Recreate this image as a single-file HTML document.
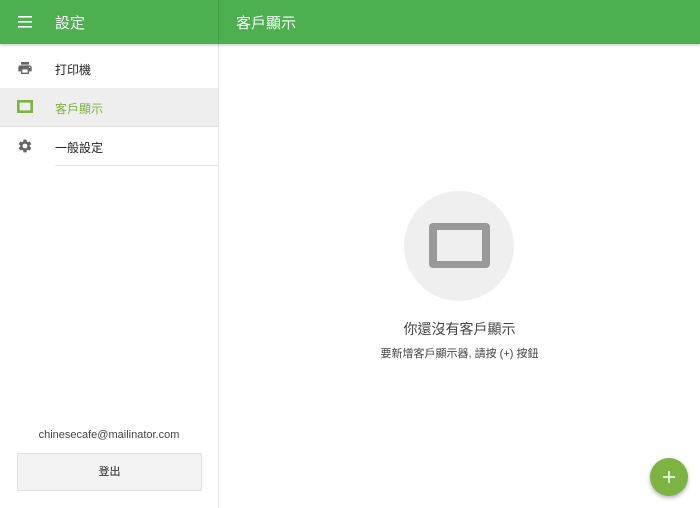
<!DOCTYPE html><html><head><style>
*{margin:0;padding:0;box-sizing:border-box}
body{width:700px;height:508px;overflow:hidden;background:#fff;font-family:"Liberation Sans","Noto Sans CJK TC",sans-serif;position:relative}
.hdr{position:absolute;left:0;top:0;width:700px;height:44px;background:#4caf50;box-shadow:0 1px 3px rgba(0,0,0,.25);z-index:2}
.hdr .sep{position:absolute;left:218px;top:0;width:1px;height:44px;background:#45a049}
.t{position:absolute;color:#fff;font-size:15px;top:12px}
.side{position:absolute;left:218px;top:44px;width:1px;height:464px;background:#e4e4e4}
.row{position:absolute;left:0;width:218px;height:39px;font-size:12px;color:#222}
.row span{position:absolute;left:55px;top:12px}
.row .ln{position:absolute;left:55px;right:0;bottom:0;height:1px;background:#e0e0e0}
.ic{position:absolute;left:17px;top:11px}
</style></head><body>
<div class="hdr"><div class="sep"></div>
<svg style="position:absolute;left:18px;top:16px" width="14" height="12"><rect y="0" width="14" height="1.6" fill="#fff"/><rect y="5" width="14" height="1.6" fill="#fff"/><rect y="10" width="14" height="1.6" fill="#fff"/></svg>
<div class="t" style="left:55px">設定</div><div class="t" style="left:236px">客戶顯示</div></div>
<div class="side"></div>
<div class="row" style="top:49px"><svg class="ic" width="16" height="16" viewBox="0 0 24 24"><path fill="#666" d="M19 8H5c-1.66 0-3 1.34-3 3v6h4v4h12v-4h4v-6c0-1.66-1.34-3-3-3zm-3 11H8v-5h8v5zm3-7c-.55 0-1-.45-1-1s.45-1 1-1 1 .45 1 1-.45 1-1 1zm-1-9H6v4h12V3z"/></svg><span>打印機</span></div>
<div class="row" style="top:88px;background:#eee"><svg class="ic" width="16" height="14" style="top:12px"><rect x="1.3" y="1.3" width="13.4" height="10.4" fill="none" stroke="#7cb342" stroke-width="2.6"/></svg><span style="color:#7cb342">客戶顯示</span><div class="ln" style="left:0"></div></div>
<div class="row" style="top:127px"><svg class="ic" width="16" height="16" viewBox="0 0 24 24"><path fill="#666" d="M19.14 12.94c.04-.3.06-.61.06-.94 0-.32-.02-.64-.07-.94l2.03-1.58a.49.49 0 0 0 .12-.61l-1.920-3.32a.49.49 0 0 0-.59-.22l-2.39.96c-.5-.38-1.03-.7-1.62-.94l-.36-2.54a.48.48 0 0 0-.48-.41h-3.84c-.24 0-.43.17-.47.41l-.36 2.54c-.59.24-1.13.57-1.62.94l-2.39-.96a.48.48 0 0 0-.59.22L2.74 8.87c-.12.21-.08.47.12.61l2.03 1.58c-.05.3-.09.63-.09.94s.02.64.07.94l-2.03 1.58a.49.49 0 0 0-.12.61l1.92 3.32c.12.22.37.29.59.22l2.39-.96c.5.38 1.030.7 1.62.94l.36 2.54c.05.24.24.41.48.41h3.84c.24 0 .44-.17.47-.41l.36-2.54c.59-.24 1.13-.56 1.62-.94l2.39.96c.22.08.47 0 .59-.22l1.92-3.32c.12-.22.07-.47-.12-.61l-2.01-1.58zM12 15.6A3.6 3.6 0 1 1 12 8.4a3.6 3.6 0 0 1 0 7.2z"/></svg><span>一般設定</span><div class="ln"></div></div>
<div style="position:absolute;left:0;width:218px;top:429px;text-align:center;font-size:11px;color:#444">chinesecafe@mailinator.com</div>
<div style="position:absolute;left:17px;top:453px;width:185px;height:38px;background:#f3f3f3;border:1px solid #e0e0e0;border-radius:2px;text-align:center;line-height:36px;font-size:11px;color:#222">登出</div>
<div style="position:absolute;left:404px;top:191px;width:110px;height:110px;border-radius:50%;background:#efefef"></div>
<div style="position:absolute;left:429px;top:223px;width:61px;height:45px;border-radius:4px;background:#999"><div style="position:absolute;left:8px;top:7px;width:45px;height:31px;background:#efefef"></div></div>
<div style="position:absolute;left:219px;width:481px;top:319px;text-align:center;font-size:14px;color:#444">你還沒有客戶顯示</div>
<div style="position:absolute;left:219px;width:481px;top:345px;text-align:center;font-size:11px;color:#444">要新增客戶顯示器, 請按 (+) 按鈕</div>
<div style="position:absolute;left:650px;top:458px;width:38px;height:38px;border-radius:50%;background:#7cb342;box-shadow:0 2px 4px rgba(0,0,0,.3)"><svg style="position:absolute;left:13px;top:13px" width="12" height="12"><rect x="5.25" y="0" width="1.5" height="12" fill="#fff"/><rect x="0" y="5.25" width="12" height="1.5" fill="#fff"/></svg></div>
</body></html>
